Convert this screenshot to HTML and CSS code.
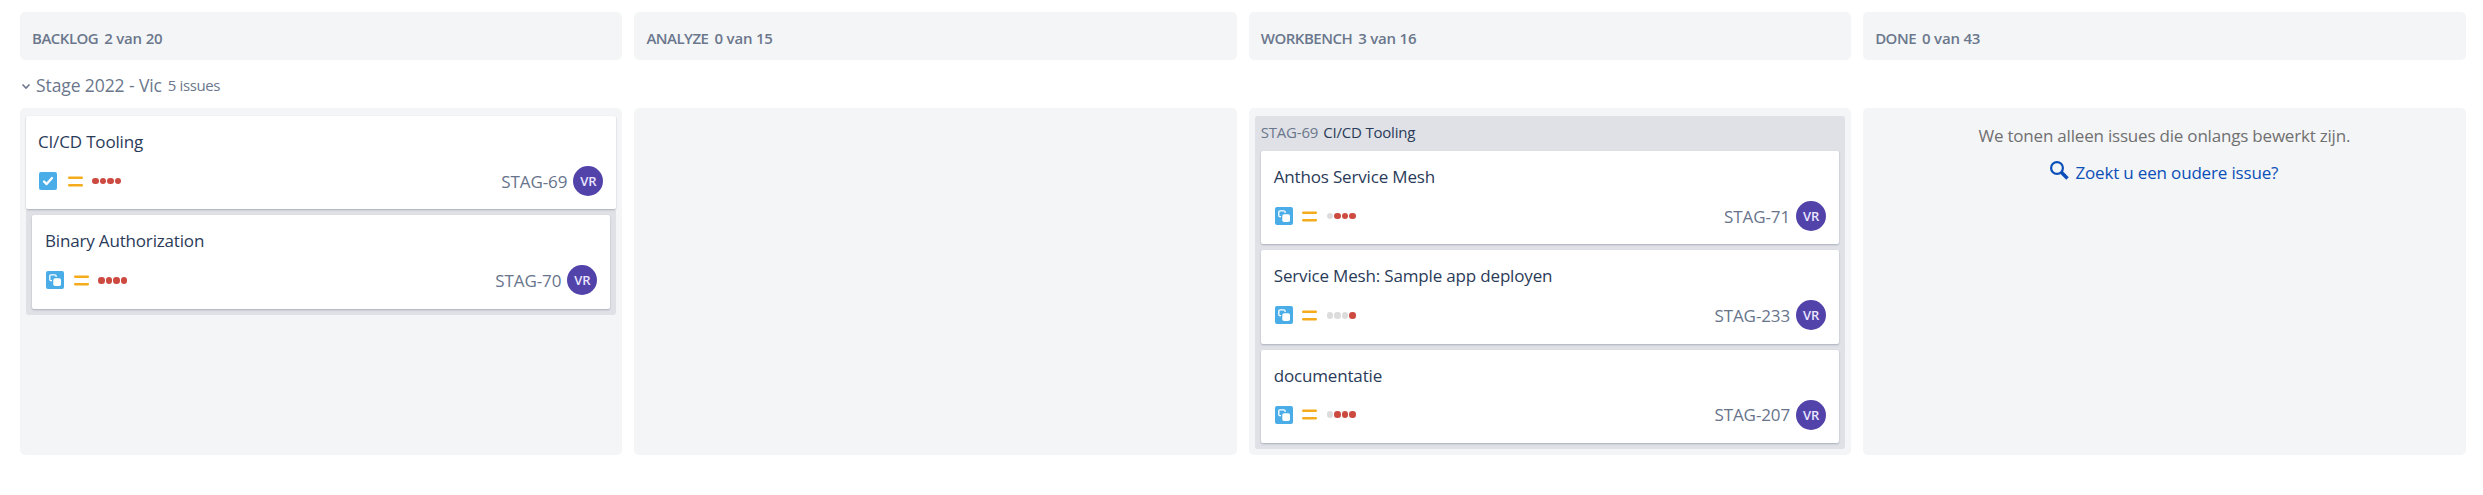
FILE: index.html
```
<!DOCTYPE html>
<html lang="nl">
<head>
<meta charset="utf-8">
<title>Board</title>
<link rel="stylesheet" href="styles.css">
</head>
<body>
<svg class="defs" width="0" height="0">
  <symbol id="task" viewBox="0 0 18 18"><rect width="18" height="18" rx="2" fill="#4bade8"/><path d="M5 9.5l2.6 2.6L13 6" fill="none" stroke="#fff" stroke-width="2.3" stroke-linecap="round" stroke-linejoin="round"/></symbol>
  <symbol id="subtask" viewBox="0 0 18 18"><rect width="18" height="18" rx="2" fill="#4bade8"/><path d="M6 9.6H5A1.2 1.2 0 0 1 3.8 8.4V5A1.2 1.2 0 0 1 5 3.8H8.900A1.2 1.2 0 0 1 10.1 5V6" fill="none" stroke="#fff" stroke-width="1.3"/><rect x="7.3" y="7.3" width="7.7" height="7.7" rx="1.8" fill="#fff"/></symbol>
  <symbol id="medium" viewBox="0 0 15 11"><path d="M1.2 1.7h12.6M1.2 9.2h12.6" stroke="#f5ab1c" stroke-width="2.4" stroke-linecap="round"/></symbol>
</svg>
<main class="board">
  <header class="row heads">
    <div class="head"><span class="name">BACKLOG</span><span class="count">2 van 20</span></div>
    <div class="head"><span class="name">ANALYZE</span><span class="count">0 van 15</span></div>
    <div class="head"><span class="name">WORKBENCH</span><span class="count">3 van 16</span></div>
    <div class="head"><span class="name">DONE</span><span class="count">0 van 43</span></div>
  </header>
  <div class="lane">
    <svg class="chev" width="10" height="7" viewBox="0 0 10 7"><path d="M1.5 1.5L5 5l3.5-3.5" fill="none" stroke="#6b778c" stroke-width="1.6"/></svg>
    <span class="lane-name">Stage 2022 - Vic</span><span class="lane-count">5 issues</span>
  </div>
  <div class="row cols">
    <section class="col">
      <article class="card parent">
        <h3 class="title">CI/CD Tooling</h3>
        <div class="meta"><svg class="type"><use href="#task"/></svg><svg class="prio"><use href="#medium"/></svg><span class="days"><i></i><i></i><i></i><i></i></span><span class="key">STAG-69</span><span class="avatar">VR</span></div>
      </article>
      <div class="group under">
        <article class="card">
          <h3 class="title">Binary Authorization</h3>
          <div class="meta"><svg class="type"><use href="#subtask"/></svg><svg class="prio"><use href="#medium"/></svg><span class="days"><i></i><i></i><i></i><i></i></span><span class="key">STAG-70</span><span class="avatar">VR</span></div>
        </article>
      </div>
    </section>
    <section class="col"></section>
    <section class="col">
      <div class="group">
        <div class="group-head"><span class="group-key">STAG-69</span><span class="group-name">CI/CD Tooling</span></div>
        <article class="card">
          <h3 class="title">Anthos Service Mesh</h3>
          <div class="meta"><svg class="type"><use href="#subtask"/></svg><svg class="prio"><use href="#medium"/></svg><span class="days"><i class="off"></i><i></i><i></i><i></i></span><span class="key">STAG-71</span><span class="avatar">VR</span></div>
        </article>
        <article class="card">
          <h3 class="title">Service Mesh: Sample app deployen</h3>
          <div class="meta"><svg class="type"><use href="#subtask"/></svg><svg class="prio"><use href="#medium"/></svg><span class="days"><i class="off"></i><i class="off"></i><i class="off"></i><i></i></span><span class="key">STAG-233</span><span class="avatar">VR</span></div>
        </article>
        <article class="card">
          <h3 class="title">documentatie</h3>
          <div class="meta"><svg class="type"><use href="#subtask"/></svg><svg class="prio"><use href="#medium"/></svg><span class="days"><i class="off"></i><i></i><i></i><i></i></span><span class="key">STAG-207</span><span class="avatar">VR</span></div>
        </article>
      </div>
    </section>
    <section class="col done">
      <p class="note">We tonen alleen issues die onlangs bewerkt zijn.</p>
      <a class="older"><svg width="19" height="19" viewBox="0 0 19 19"><circle cx="7" cy="7" r="5.9" fill="none" stroke="#0b4fb8" stroke-width="2.2"/><path d="M11.3 11.3L17.5 17.5" stroke="#0b4fb8" stroke-width="3.6"/></svg><span class="link">Zoekt u een oudere issue?</span></a>
    </section>
  </div>
</main>
</body>
</html>
```
FILE: styles.css
```
* { box-sizing: border-box; }
body { margin: 0; background: #fff; font-family: "Open Sans", "Noto Sans", sans-serif; color: #172b4d; }
.defs { position: absolute; }
.board { padding: 12px 17.5px 0 20px; }
.row { display: grid; grid-template-columns: repeat(4, minmax(0, 1fr)); gap: 12px; }
.head { height: 48px; border-radius: 5px; background: #f4f5f7; padding: 3px 12px 0; display: flex; align-items: center; gap: 6px; font-size: 15px; font-weight: 600; color: #6b778c; white-space: nowrap; }
.name { letter-spacing: -.5px; }
.count { letter-spacing: -.2px; }
.lane { height: 48px; display: flex; align-items: center; padding: 1px 0 0 1px; color: #6b778c; white-space: nowrap; }
.chev { margin: 4px 5px 0 0; }
.lane-name { font-size: 17.5px; letter-spacing: -.1px; }
.lane-count { font-size: 15px; margin: 1px 0 0 6px; letter-spacing: -.4px; }
.cols { height: 347px; }
.col { background: #f4f5f7; border-radius: 5px; padding: 8px 6px 6px; }
.card { height: 93.25px; background: #fff; border-radius: 2px; box-shadow: 0 1px 2px rgba(9,30,66,.25); padding: 13px 13px 0 14px; position: relative; white-space: nowrap; }
.parent { padding-left: 13px; }
.card + .card { margin-top: 6px; }
.title { margin: 0 0 0 -1px; font-size: 17px; line-height: 25px; font-weight: 400; letter-spacing: -.17px; color: #2a3b59; }
.meta { display: flex; align-items: center; height: 30px; margin-top: 12px; }
.type { width: 18px; height: 18px; }
.prio { width: 15px; height: 11px; margin-left: 9.5px; }
.parent .prio { margin-left: 10.5px; }
.days { display: flex; gap: 1px; margin-left: 9.5px; }
.days i { width: 6.5px; height: 6.5px; border-radius: 50%; background: #cc4a40; }
.days .off { background: #dcdcdc; }
.key { margin-left: auto; font-size: 17px; color: #67748b; letter-spacing: -.1px; }
.avatar { width: 30px; height: 30px; border-radius: 50%; background: #5243aa; color: #eae6ff; font-size: 13px; font-weight: 600; margin-left: 6px; display: flex; align-items: center; justify-content: center; }
.group { background: #dfe1e6; border-radius: 3px; padding: 0 6px 6px; }
.under { padding-top: 6px; }
.group-head { height: 35px; padding-bottom: 4px; display: flex; align-items: center; gap: 5px; font-size: 15px; letter-spacing: -.2px; white-space: nowrap; }
.group-key { color: #6b778c; }
.group-name { color: #2a3b59; }
.done { display: flex; flex-direction: column; align-items: center; white-space: nowrap; font-size: 17px; }
.note { margin: 7px 0 0; line-height: 25px; color: #707070; letter-spacing: -.2px; }
.older { display: flex; align-items: center; gap: 6px; margin-top: 11px; line-height: 28px; color: #0b4fb8; letter-spacing: -.17px; }
.older svg { margin-top: -5px; }
```
